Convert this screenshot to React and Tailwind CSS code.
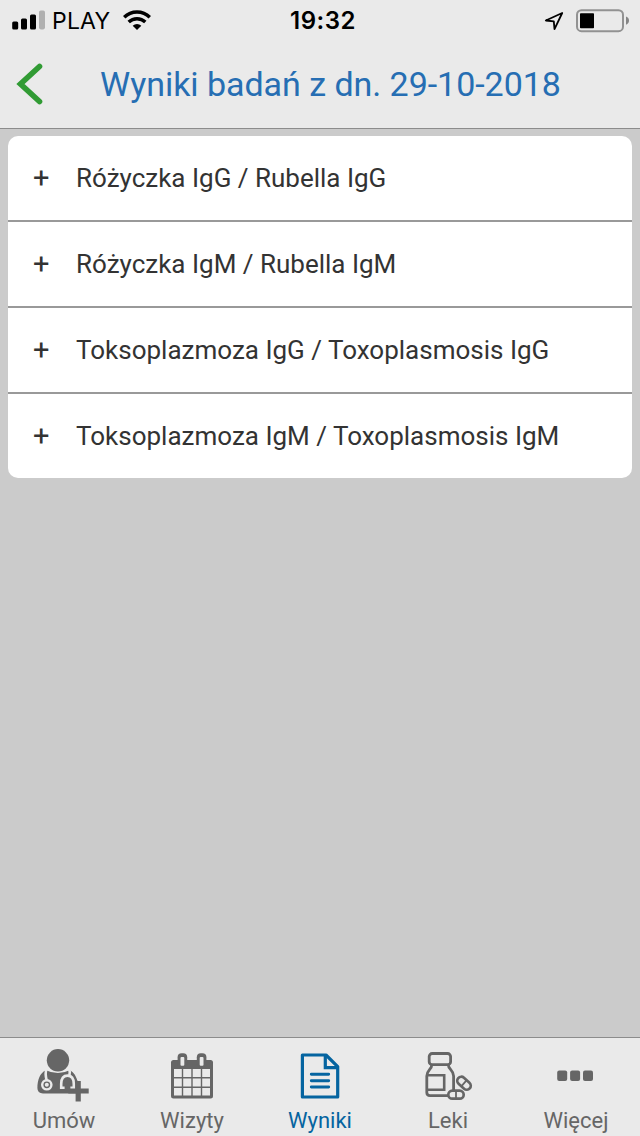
function SignalIcon() {
  return (
    <svg width="34" height="22" viewBox="0 0 34 22">
      <rect x="0.2" y="11.4" width="6" height="8" rx="1.5" fill="#000" />
      <rect x="9" y="8.4" width="6" height="11" rx="1.5" fill="#000" />
      <rect x="18" y="4.4" width="6" height="15" rx="1.5" fill="#000" />
      <rect x="27" y="0.4" width="6" height="19" rx="1.8" fill="#b0b0b0" />
    </svg>
  )
}

function WifiIcon() {
  return (
    <svg width="28" height="22" viewBox="0 0 28 22" fill="none" stroke="#000">
      <path d="M1.2 7.3A18.3 18.3 0 0 1 26.8 7.3" strokeWidth="3.5" />
      <path d="M5.7 12.1A12 12 0 0 1 22.3 12.1" strokeWidth="3.4" />
      <path d="M14 20.1L9.7 15.8A6.2 6.2 0 0 1 18.3 15.8Z" fill="#000" stroke="none" />
    </svg>
  )
}

function LocationIcon() {
  return (
    <svg width="20" height="20" viewBox="0 0 20 20" fill="none">
      <path d="M18.2 2L1.8 9.5L9.8 10.4L10.5 18.2Z" stroke="#000" strokeWidth="1.8" strokeLinejoin="round" />
    </svg>
  )
}

function BatteryIcon() {
  return (
    <svg width="54" height="24" viewBox="0 0 54 24" fill="none">
      <rect x="1" y="1.2" width="46" height="21" rx="4.5" stroke="#929292" strokeWidth="2" />
      <rect x="4" y="4.2" width="14" height="15" rx="0.8" fill="#000" />
      <path d="M50 7.6Q53 8.6 53 11.6T50 15.8Z" fill="#858585" />
    </svg>
  )
}

function DoctorIcon() {
  return (
    <svg width="64" height="60" viewBox="0 0 64 60" fill="none">
      <circle cx="26" cy="16.3" r="11.2" fill="#666" />
      <path
        d="M14 26.2C8 28.5 5.4 36 5.4 44Q5.4 49.4 11 49.4H46V38C44 32 42 28 37.5 26.2Q26 32 14 26.2Z"
        fill="#666"
      />
      <path d="M14.5 25.5Q12.8 29 14.6 36" stroke="#eaeaea" strokeWidth="2.6" />
      <circle cx="14.8" cy="40.8" r="4.6" fill="#666" stroke="#eaeaea" strokeWidth="2.4" />
      <circle cx="14.8" cy="40.8" r="2" fill="#eaeaea" />
      <path d="M37.2 25.5Q38.4 28 37.4 31.5" stroke="#eaeaea" strokeWidth="2.6" />
      <path
        d="M32.6 43.8H29.2V40C29.2 34.6 31.6 31.6 35.5 31.6S41.8 34.6 41.8 40V43.8H38.4"
        stroke="#eaeaea"
        strokeWidth="2.6"
      />
      <path d="M46.2 37V57.6M36.3 47H56.7" stroke="#666" strokeWidth="5.2" />
    </svg>
  )
}

function CalendarIcon() {
  return (
    <svg width="64" height="60" viewBox="0 0 64 60" fill="none">
      <rect x="11" y="16" width="42" height="38.6" rx="2.5" fill="#666" />
      <rect x="17.6" y="9.2" width="9.6" height="14" rx="4" fill="#666" />
      <rect x="36.8" y="9.2" width="9.6" height="14" rx="4" fill="#666" />
      <rect x="20.5" y="13" width="3.8" height="8.8" rx="1" fill="#eaeaea" />
      <rect x="39.7" y="13" width="3.8" height="8.8" rx="1" fill="#eaeaea" />
      <path d="M14 25H50V51.6H14Z" fill="#eaeaea" />
      <path d="M22.5 25V52M32 25V52M41.5 25V52M14 33.7H50M14 43.2H50" stroke="#666" strokeWidth="1.4" />
    </svg>
  )
}

function ResultsIcon() {
  return (
    <svg width="64" height="60" viewBox="0 0 64 60" fill="none" stroke="#0564a0" strokeWidth="3.2">
      <path d="M14.4 11H38L49.7 22.6V53H14.4Z" strokeLinejoin="round" />
      <path d="M37.3 11V23.6H49.7" />
      <path d="M23.3 30.2H40.7M23.3 36.7H40.7M23.3 43H40.7" strokeLinecap="round" strokeWidth="2.9" />
    </svg>
  )
}

function MedsIcon() {
  return (
    <svg width="64" height="60" viewBox="0 0 64 60" fill="none" stroke="#666" strokeWidth="2.8">
      <rect x="13.2" y="9.5" width="21.4" height="11.2" rx="3" />
      <path d="M15.8 20.7C15.8 25.5 10.8 26 10.8 32V48.6Q10.8 51.6 14 51.6H33M32.3 20.7C32.3 25.5 37.6 26 37.6 32V47" />
      <path d="M11.2 31.3H28.2V45.8H11.2" strokeWidth="2.6" />
      <rect x="32.3" y="46.7" width="15.4" height="8" rx="4" strokeWidth="2.7" />
      <path d="M40 47V54.5" strokeWidth="1.8" />
      <g transform="rotate(42 48 39.2)" strokeWidth="2.7">
        <rect x="40.3" y="35.2" width="15.4" height="8" rx="4" />
        <path d="M48 35.4V43" strokeWidth="1.8" />
      </g>
    </svg>
  )
}

function MoreIcon() {
  return (
    <svg width="64" height="60" viewBox="0 0 64 60" fill="#666">
      <rect x="13.2" y="26.5" width="10" height="10.6" rx="2" />
      <rect x="26.1" y="26.5" width="10" height="10.6" rx="2" />
      <rect x="39" y="26.5" width="10" height="10.6" rx="2" />
    </svg>
  )
}

const results = [
  'Różyczka IgG / Rubella IgG',
  'Różyczka IgM / Rubella IgM',
  'Toksoplazmoza IgG / Toxoplasmosis IgG',
  'Toksoplazmoza IgM / Toxoplasmosis IgM',
]

const tabs = [
  { label: 'Umów', Icon: DoctorIcon },
  { label: 'Wizyty', Icon: CalendarIcon },
  { label: 'Wyniki', Icon: ResultsIcon, active: true },
  { label: 'Leki', Icon: MedsIcon },
  { label: 'Więcej', Icon: MoreIcon },
]

export default function App() {
  return (
    <div className="flex h-[1136px] w-[640px] flex-col overflow-hidden bg-[#cbcbcb] font-['Roboto',sans-serif]">
      <header className="h-[129px] border-b border-[#8c8c8c] bg-[#eaeaea]">
        <div className="grid h-10 grid-cols-[278px_auto_1fr] items-center pl-3 font-['Inter',sans-serif] text-black">
          <div className="flex items-center">
            <SignalIcon />
            <span className="ml-[6px] text-[23px] leading-[42px] tracking-[0.2px]">PLAY</span>
            <span className="ml-[13px]">
              <WifiIcon />
            </span>
          </div>
          <span className="text-[24px] leading-[42px] font-semibold tracking-[0.5px]">19:32</span>
          <div className="flex items-center justify-end pr-[10px]">
            <LocationIcon />
            <span className="ml-3">
              <BatteryIcon />
            </span>
          </div>
        </div>
        <div className="flex h-[88px] items-center pl-4">
          <button className="w-[84px]" aria-label="Wstecz">
            <svg width="28" height="44" viewBox="0 0 28 44" fill="none">
              <path d="M23.5 4.5L4.5 22L23.5 39.5" stroke="#319b34" strokeWidth="5.6" strokeLinecap="round" />
            </svg>
          </button>
          <h1 className="text-[34px] leading-[44px] tracking-[-0.04px] whitespace-nowrap text-[#266eb3]">
            Wyniki badań z dn. 29-10-2018
          </h1>
        </div>
      </header>

      <main className="flex-1 px-2 pt-[7px]">
        <ul className="overflow-hidden rounded-[10px] bg-white">
          {results.map((name) => (
            <li
              key={name}
              className="flex h-[86px] items-center border-b-2 border-[#999] pl-[25px] text-[26px] text-[#333] last:h-[84px] last:border-b-0"
            >
              <span className="w-[43px] text-[29px] leading-[39px]">+</span>
              <span className="whitespace-nowrap">{name}</span>
            </li>
          ))}
        </ul>
      </main>

      <nav className="grid h-[99px] grid-cols-5 border-t border-[#8c8c8c] bg-[#eaeaea]">
        {tabs.map(({ label, Icon, active }) => (
          <button
            key={label}
            className={`flex flex-col items-center pt-[6px] text-[22px] ${active ? 'text-[#0564a0]' : 'text-[#666]'}`}
          >
            <Icon />
            <span className="leading-[34px]">{label}</span>
          </button>
        ))}
      </nav>
    </div>
  )
}
